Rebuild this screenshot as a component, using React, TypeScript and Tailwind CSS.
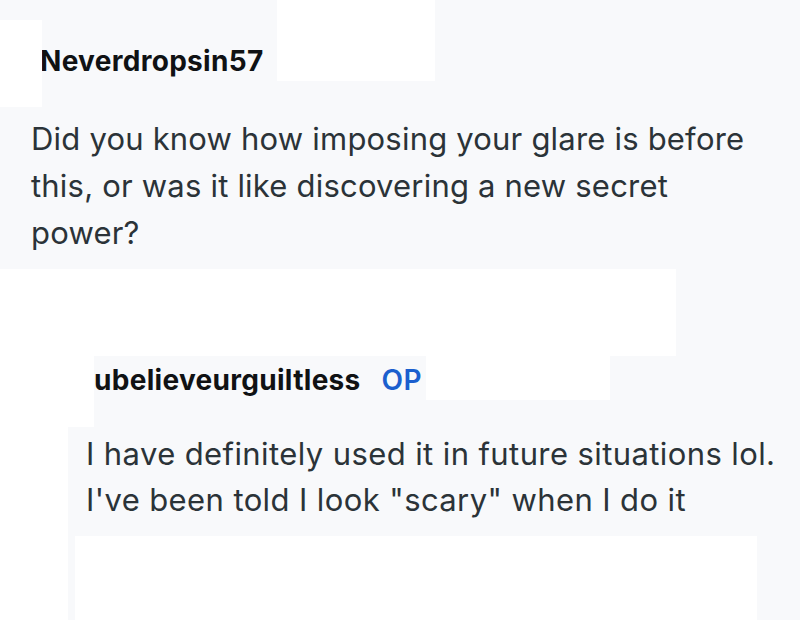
export default function App() {
  return (
    <div className="w-[800px] h-[620px] overflow-hidden bg-[#f8f9fb] flex flex-col font-['Inter','Noto_Sans',sans-serif]">
      {/* parent comment */}
      <section className="relative pt-[44px] shrink-0">
        <h2 className="pl-[40px] text-[28px] leading-[34px] font-bold tracking-[0.3px] text-[#101214]">Neverdropsin57</h2>
        <p className="ml-[31px] mt-[37px] w-[730px] text-[31px] leading-[47px] tracking-[0.2px] text-[#2b3338]">
          Did you know how imposing your glare is before this, or was it like discovering a new secret power?
        </p>
        <div className="absolute left-0 top-[20px] w-[42px] h-[87px] bg-white" />
        <div className="absolute left-[277px] top-0 w-[158px] h-[81px] bg-white" />
      </section>

      <div className="mt-[13px] w-[676px] h-[87px] shrink-0 bg-white" />

      {/* reply */}
      <div className="flex flex-1">
        <div className="w-[68px] shrink-0 bg-white" />
        <div className="relative flex flex-1 flex-col">
          <div className="absolute left-0 top-0 w-[26px] h-[71px] bg-white" />
          <div className="absolute left-[358px] top-0 w-[184px] h-[44px] bg-white" />
          <div className="pl-[26px] pt-[7px] flex items-center gap-[21px] text-[28px] leading-[34px] tracking-[0.3px]">
            <span className="font-bold text-[#101214]">ubelieveurguiltless</span>
            <span className="font-semibold text-[#1b5fce]">OP</span>
          </div>
          <p className="pl-[18px] mt-[34px] text-[31px] leading-[46px] tracking-[0.4px] text-[#2b3338]">
            I have definitely used it in future situations lol. I've been told I look "scary" when I do it
          </p>
          <div className="mt-auto ml-[7px] w-[682px] h-[84px] bg-white" />
        </div>
      </div>
    </div>
  );
}
